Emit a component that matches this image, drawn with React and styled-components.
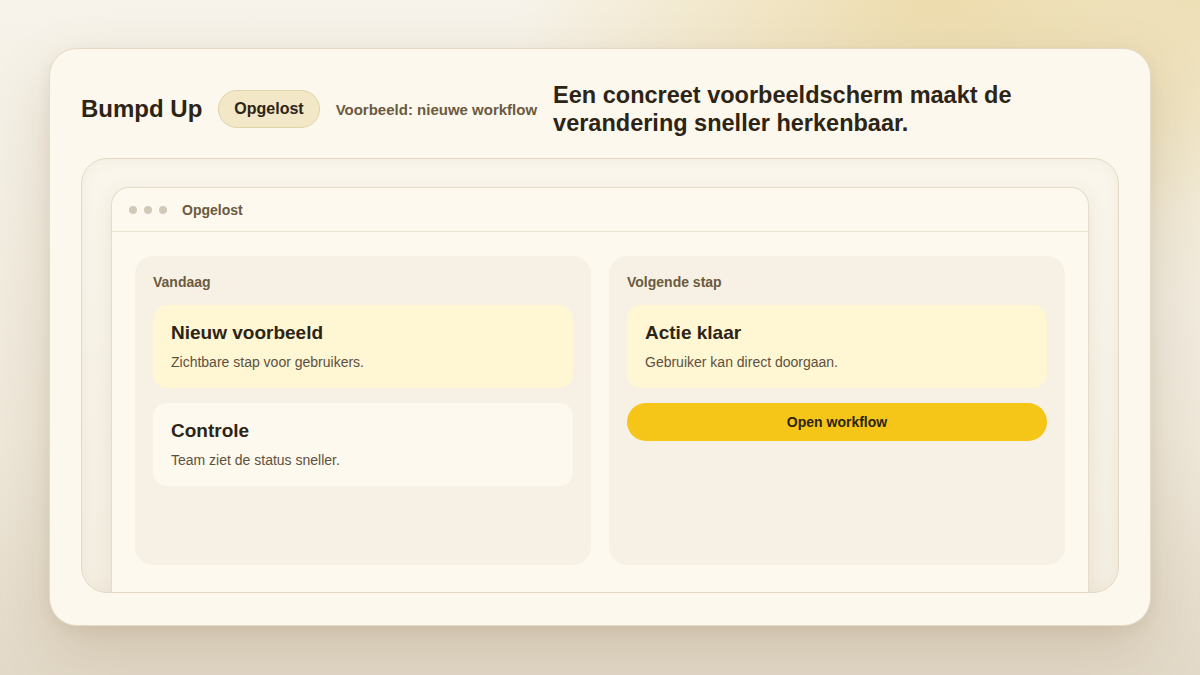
import React from "react";
import styled, { createGlobalStyle } from "styled-components";

const GlobalStyle = createGlobalStyle`
  html, body {
    margin: 0;
    padding: 0;
  }
  body {
    font-family: "Liberation Sans", Arial, sans-serif;
    color: #2d2415;
  }
  * {
    box-sizing: border-box;
  }
`;

const Page = styled.main`
  width: 1200px;
  height: 675px;
  padding: 48px 49px;
  overflow: hidden;
  background:
    radial-gradient(ellipse 420px 260px at 78% 0%, rgba(236, 218, 168, 0.95) 0, rgba(236, 218, 168, 0) 100%),
    radial-gradient(ellipse 300px 300px at 100% 0%, rgba(236, 222, 180, 0.8) 0, rgba(236, 222, 180, 0) 100%),
    linear-gradient(180deg, #f7f3ea 0%, #efe8da 65%, #e3d9c8 100%);
`;

const Card = styled.section`
  height: 578px;
  display: flex;
  flex-direction: column;
  gap: 21px;
  padding: 32px 31px 32px;
  background: #fcf8ee;
  border: 1px solid #e4dac6;
  border-radius: 28px;
  box-shadow: 0 24px 60px rgba(120, 95, 50, 0.2), 0 4px 14px rgba(120, 95, 50, 0.08);
`;

const Header = styled.header`
  display: flex;
  align-items: center;
  gap: 16px;
`;

const Brand = styled.h1`
  margin: 0;
  font-size: 24px;
  font-weight: 700;
  white-space: nowrap;
`;

const Pill = styled.span`
  display: inline-flex;
  align-items: center;
  height: 38px;
  padding: 0 15px;
  border-radius: 19px;
  background: #f2e7c6;
  border: 1px solid #e1d2a8;
  font-size: 16px;
  font-weight: 700;
  white-space: nowrap;
`;

const Eyebrow = styled.span`
  font-size: 15px;
  font-weight: 700;
  color: #6b5a3e;
  white-space: nowrap;
`;

const Headline = styled.h2`
  margin: 0;
  font-size: 23.5px;
  line-height: 28px;
  font-weight: 700;
`;

const Frame = styled.div`
  flex: 1;
  display: flex;
  padding: 28px 29px 0;
  background: linear-gradient(180deg, #faf6ec 0%, #f4eee2 100%);
  border: 1px solid #e3d9c6;
  border-radius: 26px;
  overflow: hidden;
  box-shadow: inset 0 0 14px rgba(150, 125, 80, 0.08);
`;

const Window = styled.div`
  flex: 1;
  display: flex;
  flex-direction: column;
  background: #fdf9ee;
  border: 1px solid #e6dcc9;
  border-bottom: none;
  border-radius: 18px 18px 0 0;
  box-shadow: 0 6px 20px rgba(120, 95, 50, 0.1);
`;

const TitleBar = styled.div`
  display: flex;
  align-items: center;
  gap: 7px;
  height: 44px;
  padding: 0 17px;
  border-bottom: 1px solid #ebe2d1;
`;

const Dot = styled.span`
  width: 8px;
  height: 8px;
  border-radius: 50%;
  background: #d2c9b8;
`;

const WindowTitle = styled.span`
  margin-left: 8px;
  font-size: 14px;
  font-weight: 700;
  color: #6b5a3e;
`;

const Body = styled.div`
  flex: 1;
  display: grid;
  grid-template-columns: 1fr 1fr;
  gap: 18px;
  padding: 24px 23px 27px;
`;

const Panel = styled.div`
  display: flex;
  flex-direction: column;
  gap: 15px;
  padding: 18px 18px;
  background: #f7f1e5;
  border-radius: 18px;
`;

const PanelLabel = styled.div`
  font-size: 14px;
  font-weight: 700;
  color: #6b5a3e;
  line-height: 16px;
`;

const Item = styled.div`
  display: flex;
  flex-direction: column;
  gap: 10px;
  padding: 16px 18px 17px;
  border-radius: 14px;
  background: ${(p) => (p.$highlight ? "#fff6d4" : "#fdf9ee")};
`;

const ItemTitle = styled.div`
  font-size: 19px;
  font-weight: 700;
  line-height: 23px;
`;

const ItemText = styled.div`
  font-size: 14px;
  line-height: 17px;
  color: #5e5040;
`;

const Button = styled.button`
  height: 38px;
  border: none;
  border-radius: 19px;
  background: #f5c518;
  font-family: inherit;
  font-size: 14px;
  font-weight: 700;
  color: #2d2415;
  cursor: pointer;
`;

export default function App() {
  return (
    <>
      <GlobalStyle />
      <Page>
        <Card>
          <Header>
            <Brand>Bumpd Up</Brand>
            <Pill>Opgelost</Pill>
            <Eyebrow>Voorbeeld: nieuwe workflow</Eyebrow>
            <Headline>
              Een concreet voorbeeldscherm maakt de verandering sneller herkenbaar.
            </Headline>
          </Header>
          <Frame>
            <Window>
              <TitleBar>
                <Dot />
                <Dot />
                <Dot />
                <WindowTitle>Opgelost</WindowTitle>
              </TitleBar>
              <Body>
                <Panel>
                  <PanelLabel>Vandaag</PanelLabel>
                  <Item $highlight>
                    <ItemTitle>Nieuw voorbeeld</ItemTitle>
                    <ItemText>Zichtbare stap voor gebruikers.</ItemText>
                  </Item>
                  <Item>
                    <ItemTitle>Controle</ItemTitle>
                    <ItemText>Team ziet de status sneller.</ItemText>
                  </Item>
                </Panel>
                <Panel>
                  <PanelLabel>Volgende stap</PanelLabel>
                  <Item $highlight>
                    <ItemTitle>Actie klaar</ItemTitle>
                    <ItemText>Gebruiker kan direct doorgaan.</ItemText>
                  </Item>
                  <Button>Open workflow</Button>
                </Panel>
              </Body>
            </Window>
          </Frame>
        </Card>
      </Page>
    </>
  );
}
